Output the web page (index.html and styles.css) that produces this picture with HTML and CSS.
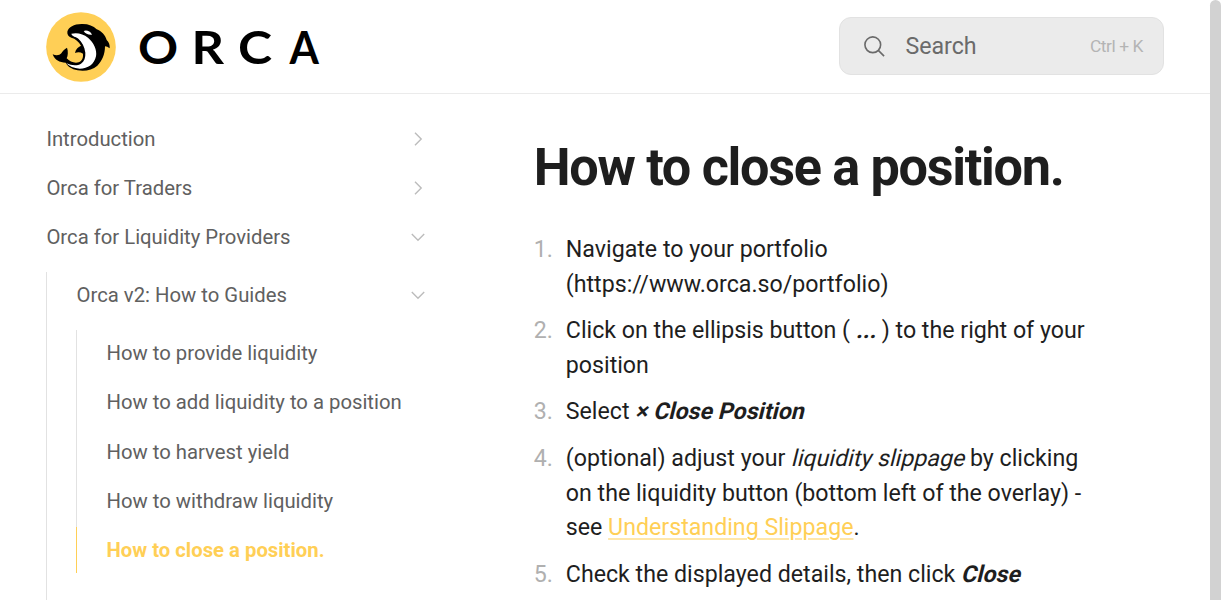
FILE: index.html
```html
<!DOCTYPE html>
<html lang="en">
<head>
<meta charset="utf-8">
<title>How to close a position. - Orca</title>
<link rel="stylesheet" href="styles.css">
</head>
<body>
<div class="page">
  <header class="header">
    <a class="logo" aria-label="Orca">
      <svg class="logo-mark" viewBox="18 20 210 208">
        <circle cx="123" cy="124" r="104.5" fill="#ffcf56"/>
        <path d="M82 78C86 64 103 54 128 55C146 55 160 61 170 71C185 77 196 89 200 103C207 109 210 118 209 128C204 124 200 122 195 122C195 146 186 166 172 180C157 193 135 198 113 194C94 190 83 182 77 171C59 171 44 163 38 146C49 151 59 149 64 143C68 136 73 131 81 126C85 137 84 150 80 158C89 168 104 174 116 170C127 166 130 155 129 144C121 139 113 139 105 142C107 131 114 124 123 120C117 108 106 99 94 96C86 93 81 87 82 78Z" fill="#000"/>
        <path d="M94 84C111 80 130 84 144 96C161 111 172 132 168 152C163 176 144 189 119 189C101 188 88 182 79 173C95 180 112 181 123 174C133 167 137 155 136 141C134 123 126 109 115 99C108 93 96 93 94 84Z" fill="#fff"/>
        <path d="M131 76C139 72 151 76 156 87C146 88 136 85 131 76Z" fill="#fff"/>
      </svg>
      <svg class="logo-word" viewBox="0 0 190 50">
        <text transform="translate(5 41.5) scale(1.08 1)">O</text>
        <text transform="translate(58.5 41.5) scale(1.1 1)">R</text>
        <text transform="translate(105 41.5) scale(1.12 1)">C</text>
        <text transform="translate(156.4 41.5) scale(.92 1)">A</text>
      </svg>
    </a>
    <div class="search">
      <svg class="search-icon" viewBox="0 0 24 24"><circle cx="10.2" cy="10.2" r="8.2"/><path d="M16 16l6 6"/></svg>
      <span class="search-label">Search</span>
      <span class="search-keys">Ctrl + K</span>
    </div>
  </header>
  <div class="body">
    <nav class="sidebar">
      <ul class="menu">
        <li><a class="item">Introduction<svg class="chevron" viewBox="0 0 14 14"><path d="M4 .8L10.2 7L4 13.2"/></svg></a></li>
        <li><a class="item">Orca for Traders<svg class="chevron" viewBox="0 0 14 14"><path d="M4 .8L10.2 7L4 13.2"/></svg></a></li>
        <li><a class="item">Orca for Liquidity Providers<svg class="chevron" viewBox="0 0 14 14"><path d="M.8 4L7 10.2L13.2 4"/></svg></a>
          <ul class="menu nested outer">
            <li><a class="item">Orca v2: How to Guides<svg class="chevron" viewBox="0 0 14 14"><path d="M.8 4L7 10.2L13.2 4"/></svg></a>
              <ul class="menu nested">
                <li><a class="item">How to provide liquidity</a></li>
                <li><a class="item">How to add liquidity to a position</a></li>
                <li><a class="item">How to harvest yield</a></li>
                <li><a class="item">How to withdraw liquidity</a></li>
                <li><a class="item active">How to close a position.</a></li>
              </ul>
            </li>
          </ul>
        </li>
      </ul>
    </nav>
    <main class="content">
      <h1 class="title">How to close a position.</h1>
      <ol class="steps">
        <li class="step"><span class="num">1.</span><p class="text">Navigate to your portfolio (https://www.orca.so/portfolio)</p></li>
        <li class="step"><span class="num">2.</span><p class="text">Click on the ellipsis button ( <b class="slant">...</b> ) to the right of your position</p></li>
        <li class="step"><span class="num">3.</span><p class="text">Select <b class="slant">× Close Position</b></p></li>
        <li class="step"><span class="num">4.</span><p class="text">(optional) adjust your <span class="slant">liquidity slippage</span> by clicking on the liquidity button (bottom left of the overlay) - see <a class="link">Understanding Slippage</a>.</p></li>
        <li class="step"><span class="num">5.</span><p class="text">Check the displayed details, then click <b class="slant">Close</b></p></li>
      </ol>
    </main>
  </div>
</div>
<div class="scrollbar"></div>
</body>
</html>
```
FILE: styles.css
```css
* { box-sizing: border-box; }
html { font-size: 23.2px; }
body {
  margin: 0;
  height: 600px;
  overflow: hidden;
  display: flex;
  background: #fff;
  color: #1e1e1e;
  font-family: Roboto, "Liberation Sans", sans-serif;
}
.page { width: 1210px; height: 600px; overflow: hidden; }
.scrollbar { width: 11px; height: 600px; background: #d2d2d2; border-radius: 6px 6px 0 0; }
.header {
  height: 94px;
  padding: 0 46px 1px;
  display: flex;
  align-items: center;
  justify-content: space-between;
  border-bottom: 1px solid #ebebeb;
}
.logo { display: flex; align-items: center; gap: 17px; padding-top: 1px; }
.logo-mark { width: 70px; height: 70px; }
.logo-word { width: 190px; height: 50px; overflow: visible; }
.logo-word text { font: 700 46px Lato, sans-serif; fill: #000; }
.search {
  width: 325px;
  height: 58px;
  padding: 0 20px 0 23px;
  display: flex;
  align-items: center;
  background: #ebebeb;
  border: 1px solid #e2e2e2;
  border-radius: 12px;
  color: #6a6a6a;
  font-size: 23.2px;
}
.search-icon { width: 23px; height: 23px; margin-right: 19.4px; fill: none; stroke: #6a6a6a; stroke-width: 1.7; }
.search-label { flex: 1; }
.search-keys { color: #b4b4b4; font-size: 17.4px; letter-spacing: -0.43px; }
.body { display: flex; }
.sidebar { width: 426px; padding: 22px 0 0 46px; }
.menu { list-style: none; margin: 0; padding: 0; display: flex; flex-direction: column; gap: 3.3px; }
.item {
  height: 45.9px;
  padding-left: .4px;
  display: flex;
  align-items: center;
  justify-content: space-between;
  font-size: 20.3px;
  color: #606060;
}
.chevron { width: 14px; height: 14px; margin-right: .8px; fill: none; stroke: #bcbcbc; stroke-width: 1.4; }
.nested { margin-top: 12.1px; border-left: 1px solid #e2e2e2; }
.nested .item { padding-left: 29.5px; }
.nested .nested { margin-left: 29px; }
.nested .active { margin-left: -1px; border-left: 1px solid #ffcf56; color: #ffcf56; font-weight: 700; }
.outer { min-height: 400px; }
.content { width: 560px; margin-left: 107.8px; padding-top: 41px; }
.title { margin: 0 0 32px; font-size: 52.2px; line-height: 65px; letter-spacing: -.025em; font-weight: 700; white-space: nowrap; }
.steps { list-style: none; margin: 0; padding: 0; display: flex; flex-direction: column; gap: 11.6px; }
.step { display: flex; font-size: 23.2px; line-height: 34.8px; }
.num { width: 32px; flex: none; color: #b0b0b0; }
.text { margin: 0; width: 521px; }
.slant { display: inline-block; transform: skewX(-14deg); transform-origin: 0 70%; }
.link { color: #ffcf56; text-decoration: underline; text-decoration-color: #ffe7ab; text-decoration-thickness: 2px; text-underline-offset: 3px; }
```
